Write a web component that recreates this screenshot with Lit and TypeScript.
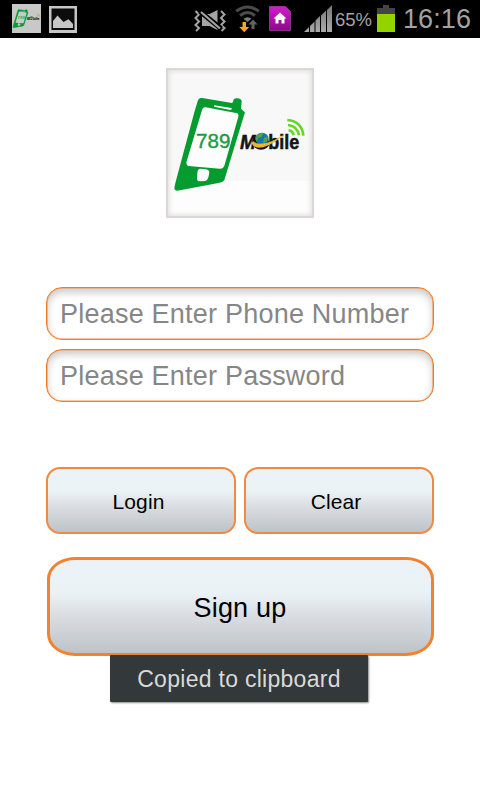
import { LitElement, html, svg, css } from "lit";
import { customElement, property } from "lit/decorators.js";

const brandArt = svg`
  <path class="body" fill="#059b2f" d="M119 109 Q122 107 127 108 L216 123 Q220 121 220 115 Q222 108 231 109 Q244 110 245 117 L243 140 L254 150 Q256 153 253 157 L193 354 Q190 361 179 362 L52 386 Q43 386 43 378 L47 359 L103 151 L112 121 Q114 112 119 109 Z"/>
  <path class="screen" d="M163 130 L162 134 L211 144 L216 141 L214 138 Z M127 141 L80 298 Q77 310 86 312 L179 320 Q189 321 193 311 L235 164 Q237 154 228 153 L137 136 Q129 135 127 141 Z M120 320 Q112 322 112 335 L111 350 Q112 358 120 358 L136 357 Q144 354 146 342 L148 330 Q147 324 139 322 Z"/>
  <text x="108" y="257" font-size="60" fill="#1b9c45" stroke="#1b9c45" stroke-width="1.2" textLength="103" lengthAdjust="spacingAndGlyphs">789</text>
  <g font-size="59" font-weight="bold" fill="#141414" stroke="#141414" stroke-width="1.5">
    <text x="240" y="261" font-style="italic" textLength="47" lengthAdjust="spacingAndGlyphs">M</text>
    <text x="325" y="261" textLength="93" lengthAdjust="spacingAndGlyphs">bile</text>
  </g>
  <ellipse cx="303" cy="243" rx="25" ry="20" fill="#111"/>
  <ellipse cx="306" cy="230" rx="20" ry="18" fill="#1377ad"/>
  <path fill="#54a34b" d="M291 220 Q300 210 310 214 L305 224 L295 229 L291 239 L286 232 Z M312 227 L324 223 L320 240 L309 243 Z"/>
  <path fill="#f0b52b" d="M274 243 Q286 268 325 250 Q350 238 374 215 Q345 236 318 243 Q290 249 281 238 Z"/>
  <g fill="none" stroke="#65d626" stroke-width="8">
    <path d="M386 205 Q398 206 401 220"/>
    <path d="M384 189 Q412 192 417 220"/>
    <path d="M382 174 Q426 178 430 221"/>
  </g>`;

const muteIcon = html`<svg width="33" height="22" viewBox="0 0 33 22">
  <g fill="none" stroke="#a4a4a4" stroke-width="2">
    <path d="M1.500 1l3.500 3.500-3.500 3.500 3.500 3.500-3.500 3.500 3.500 3-3 3"/>
    <path d="M27 1l3.500 3.500-3.500 3.500 3.500 3.500-3.500 3.500 3.500 3-3 3"/>
  </g>
  <path fill="#a4a4a4" d="M8 4h7.500l8-4v20l-8-4H8z"/>
  <path stroke="#000" stroke-width="5" d="M6 1.500l21 17"/>
  <path stroke="#a4a4a4" stroke-width="2.200" d="M7 2l19 16.500"/>
</svg>`;

const wifiIcon = html`<svg width="26" height="28" viewBox="0 0 26 28">
  <g fill="none" stroke="#4b4b4b" stroke-width="3">
    <path d="M1.200 6.300Q12.500-2.300 23.800 6.300"/>
    <path d="M5 10.600Q12.500 4.400 20 10.600"/>
  </g>
  <path fill="#7d7d7d" d="M8.500 13.700Q12.500 10.600 16.500 13.700L12.500 17Z"/>
  <path fill="#ffa12b" d="M7.500 17h3.500v5h3.200l-5 5.200L4.300 22h3.200z"/>
  <path fill="#636363" d="M16.500 24h3v-4.500h3L18 14.500l-4.500 5h3z"/>
</svg>`;

const homeIcon = html`<svg width="22" height="25" viewBox="0 0 22 25">
  <defs><linearGradient id="card" x2="0" y2="1"><stop stop-color="#d51bcf"/><stop offset=".5" stop-color="#b012aa"/><stop offset="1" stop-color="#8a0a87"/></linearGradient></defs>
  <path fill="url(#card)" stroke="#9b4a9b" stroke-width=".7" d="M.5 .5h16l5 5V24.500H.5z"/>
  <path fill="#fff" d="M11 6.500l6.500 6h-2v5h-3v-3.500h-3v3.500h-3v-5h-2z"/>
</svg>`;

const signalIcon = html`<svg width="28" height="27" viewBox="0 0 28 27">
  <defs><linearGradient id="bars" x2="0" y2="1"><stop stop-color="#777"/><stop offset="1" stop-color="#aaa"/></linearGradient></defs>
  <path fill="url(#bars)" d="M0 27l5-5v5zM6 21l4.500-4.500V27H6zM11.500 15.500l4.500-4.500V27h-4.500zM17 10.500l5-5V27h-5zM23 5l5-5v27h-5z"/>
</svg>`;

const pictureIcon = html`<svg width="28" height="27" viewBox="0 0 28 27">
  <rect width="28" height="27" fill="#c6c6c6"/>
  <rect x="2.500" y="2.500" width="23" height="21.500" fill="#0c0c0c"/>
  <path fill="#c6c6c6" d="M4 22v-7l4.500-5.500 6 6.500 5-2.800 4.500 4.800v4z"/>
</svg>`;

@customElement("brand-logo")
class BrandLogo extends LitElement {
  @property({ type: Boolean, reflect: true }) small = false;
  static styles = css`
    :host { display: block; width: 148px; height: 150px; }
    :host([small]) { width: 29px; height: 29px; }
    svg { display: block; width: 100%; height: 100%; font-family: "Liberation Sans", Arial, sans-serif; }
    .screen { fill: #fdfdfd; }
    .frame { background: linear-gradient(#f8f8f8 0 76%, #fdfdfd 76%); border: 2px solid #dad7d6; box-sizing: border-box; width: 100%; height: 100%; box-shadow: inset 0 0 5px 1px #dedcdb; }
    .tile { width: 100%; height: 100%; background: #c8c8c8; }
    .tile .screen { fill: #c4ccc5; }
    .tile .body { stroke: #059b2f; stroke-width: 10px; }
  `;
  render() {
    return html`<div class=${this.small ? "tile" : "frame"}>
      <svg viewBox=${this.small ? "28 20 412 450" : "24 24 432 438"} preserveAspectRatio="none">${brandArt}</svg>
    </div>`;
  }
}

@customElement("status-bar")
class StatusBar extends LitElement {
  static styles = css`
    :host { display: flex; align-items: flex-start; height: 38px; background: #000; color: #a3a3a3; font-family: "Liberation Sans", Arial, sans-serif; box-sizing: border-box; padding-left: 12px; }
    svg { display: block; flex: none; }
    .logo { margin-top: 4px; }
    .picture { margin: 6px 0 0 8px; }
    .mute { margin: 10px 0 0 117px; }
    .wifi { margin: 5px 0 0 8px; }
    .home { margin: 6px 0 0 8px; }
    .signal { margin: 5px 0 0 13px; }
    .percent { margin: 10px 0 0 3px; width: 38px; font-size: 18.500px; line-height: 20px; white-space: nowrap; }
    .battery { margin: 5px 0 0 4px; width: 18px; height: 27px; display: flex; flex-direction: column; align-items: center; }
    .cap { width: 6px; height: 3px; background: #444; }
    .empty { width: 18px; height: 6px; background: #444; }
    .charge { width: 18px; flex: 1; background: #93d300; }
    .time { margin: 3px 0 0 8px; font-size: 27px; line-height: 32px; white-space: nowrap; letter-spacing: 0.1px; }
  `;
  render() {
    return html`
      <brand-logo small class="logo"></brand-logo>
      <div class="picture">${pictureIcon}</div>
      <div class="mute">${muteIcon}</div>
      <div class="wifi">${wifiIcon}</div>
      <div class="home">${homeIcon}</div>
      <div class="signal">${signalIcon}</div>
      <div class="percent">65%</div>
      <div class="battery"><div class="cap"></div><div class="empty"></div><div class="charge"></div></div>
      <div class="time">16:16</div>`;
  }
}

@customElement("app-root")
class AppRoot extends LitElement {
  static styles = css`
    :host { display: block; position: relative; width: 480px; height: 800px; overflow: hidden; background: #fff; font-family: "Liberation Sans", Arial, sans-serif; }
    .logo { margin: 30px auto 0; }
    .form { margin: 69px 46px 0; display: flex; flex-direction: column; }
    input { box-sizing: border-box; width: 388px; height: 53px; margin: 0 0 9px; padding: 2px 0 0 13px; border: 1px solid #f07c25; border-radius: 16px; outline: 0; background: #fff; box-shadow: inset 0 0 0 0.6px #f39a58, inset 0 4px 9px #c6c6c6; font: 27px "Liberation Sans", Arial, sans-serif; letter-spacing: 0.22px; color: #222; }
    input::placeholder { color: #868686; opacity: 1; }
    .row { display: flex; gap: 8px; margin-top: 56px; }
    button { box-sizing: border-box; padding: 2px 0 0; margin: 0; color: #000; font-family: inherit; border: 2px solid #f18a40; background: linear-gradient(#eaf3f8 0, #ebf2f6 36%, #dce0e4 56%, #bbc1c5 100%) border-box; }
    .half { width: 190px; height: 67px; border-radius: 14px; font-size: 21px; letter-spacing: 0.1px; padding-right: 5px; }
    .right { padding-right: 6px; }
    .signup { width: 387px; height: 99px; margin: 23px 0 0 1px; padding: 4px 1px 0 0; border-width: 3px; border-color: #f18230; border-radius: 28px / 22px; font-size: 27px; letter-spacing: 0.2px; }
    .toast { position: absolute; left: 110px; top: 655px; width: 258px; height: 47px; box-sizing: border-box; border-radius: 1px; background: #33383b; box-shadow: 1px 1px 2px #8a8a8a; color: #d9dad9; text-align: center; font-size: 23px; line-height: 48px; letter-spacing: 0.28px; white-space: nowrap; }
  `;
  render() {
    return html`
      <status-bar></status-bar>
      <brand-logo class="logo"></brand-logo>
      <div class="form">
        <input type="tel" placeholder="Please Enter Phone Number">
        <input type="password" placeholder="Please Enter Password">
        <div class="row">
          <button class="half">Login</button>
          <button class="half right">Clear</button>
        </div>
        <button class="signup">Sign up</button>
      </div>
      <div class="toast">Copied to clipboard</div>`;
  }
}
